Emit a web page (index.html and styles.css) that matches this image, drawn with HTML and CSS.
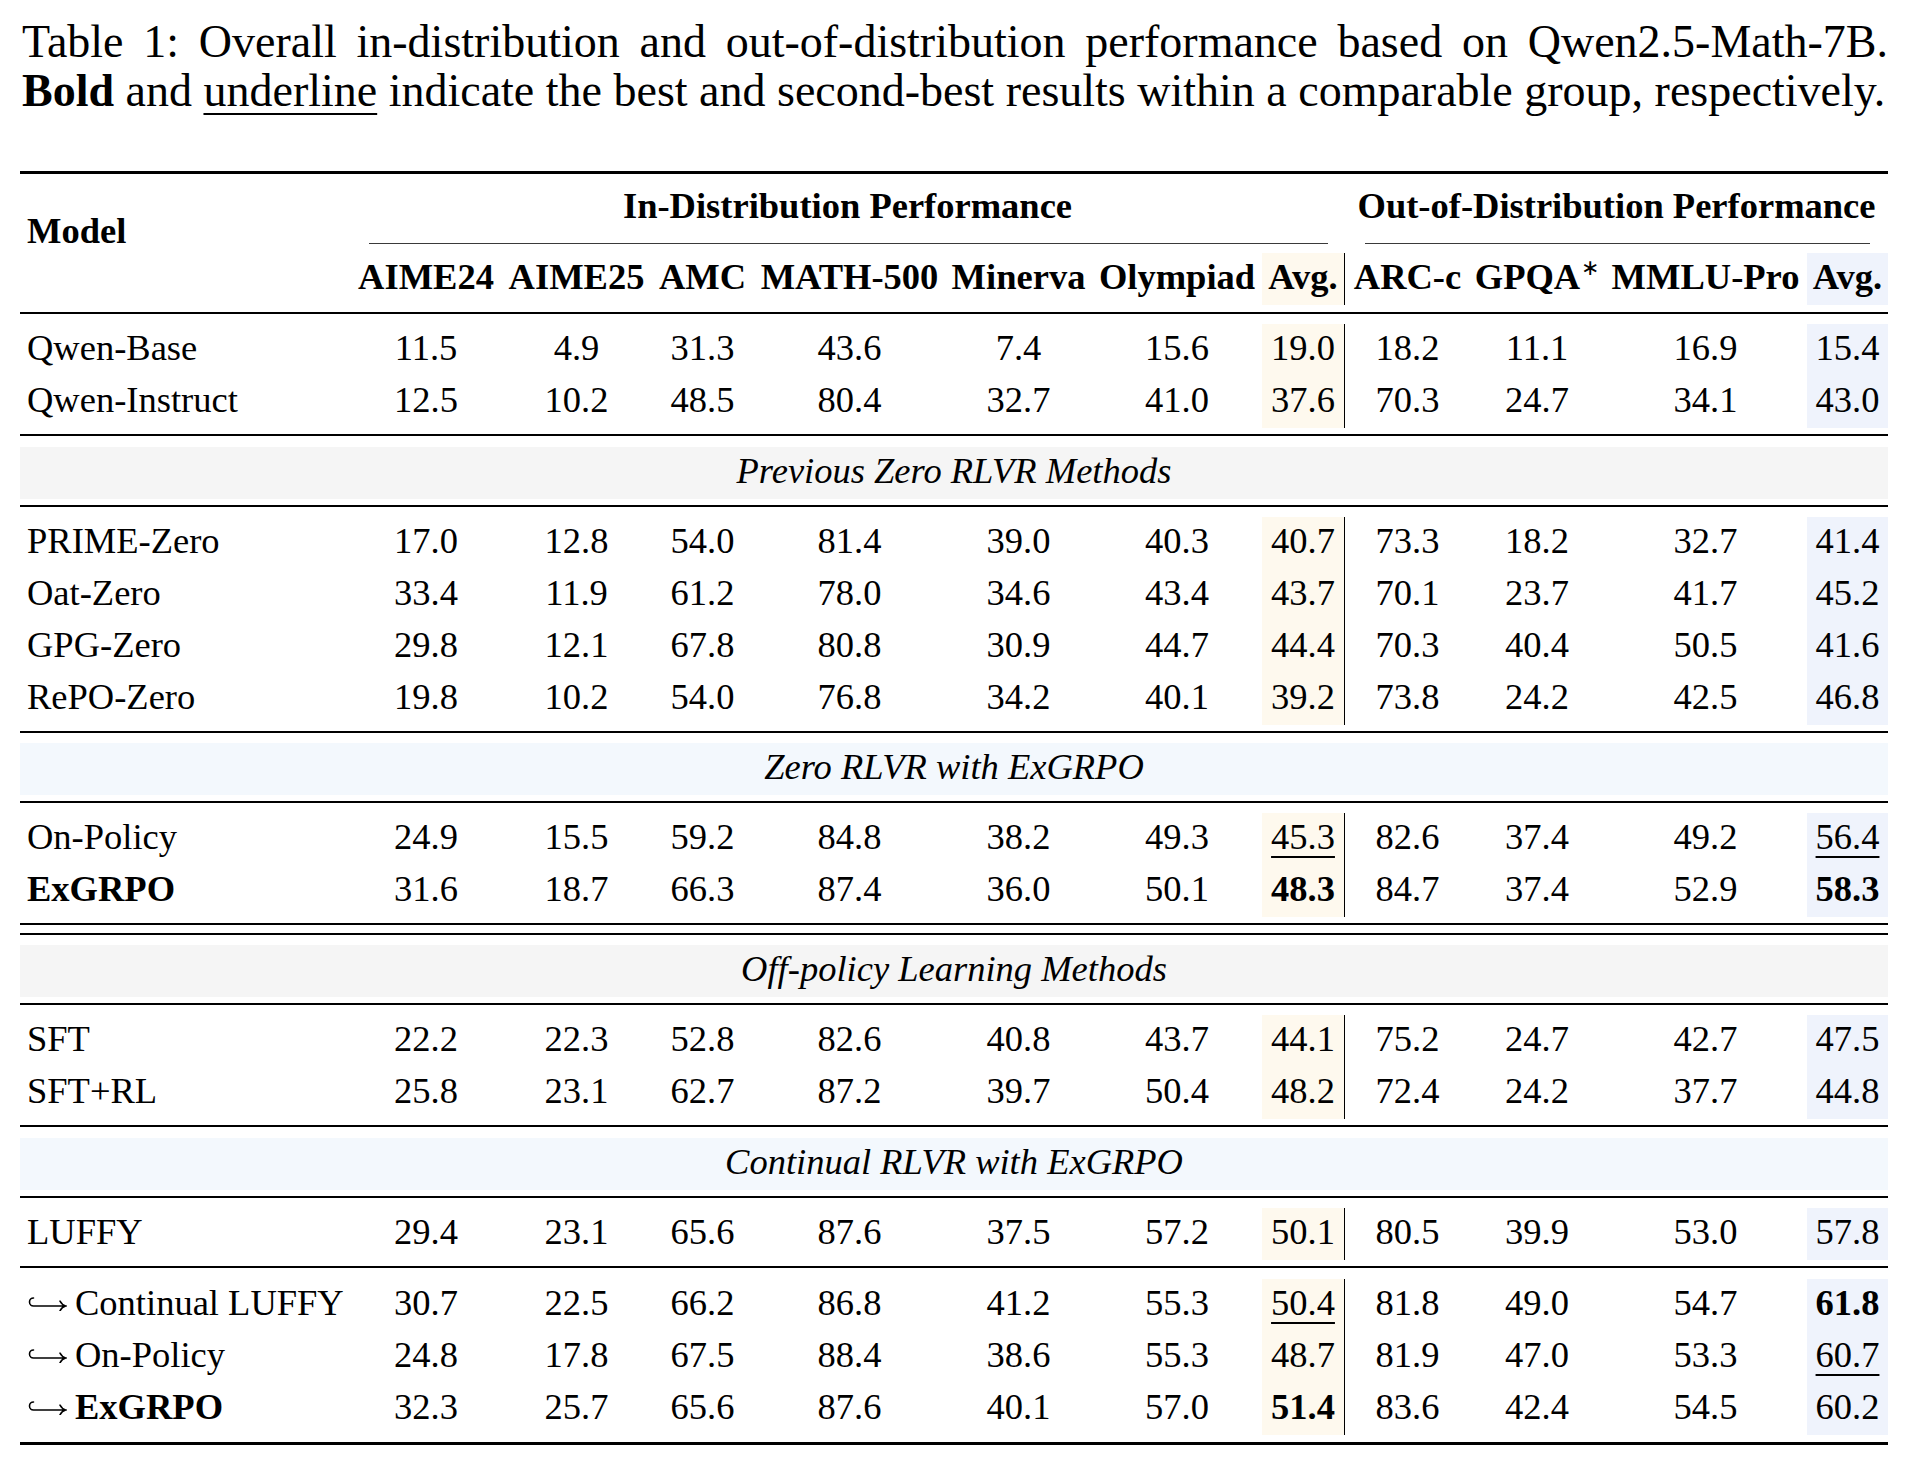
FILE: index.html
```html
<!DOCTYPE html>
<html lang="en">
<head>
<meta charset="utf-8">
<title>Table 1</title>
<link rel="stylesheet" href="styles.css">
</head>
<body>
<div class="page">
  <div class="caption">
    <div class="cap-line cap-l1">Table 1: Overall in-distribution and out-of-distribution performance based on Qwen2.5-Math-7B.</div>
    <div class="cap-line cap-l2"><b>Bold</b> and <span class="ul">underline</span> indicate the best and second-best results within a comparable group, respectively.</div>
  </div>

  <div class="tbl">
    <div class="rule heavy top"></div>

    <div class="thead">
      <div class="model-h">Model</div>
      <div class="group-h g-id">In-Distribution Performance</div>
      <div class="group-h g-ood">Out-of-Distribution Performance</div>
      <div class="cmid c-id"></div>
      <div class="cmid c-ood"></div>
      <div class="lab l2">AIME24</div>
      <div class="lab">AIME25</div>
      <div class="lab">AMC</div>
      <div class="lab">MATH-500</div>
      <div class="lab">Minerva</div>
      <div class="lab">Olympiad</div>
      <div class="lab avg1">Avg.</div>
      <div class="lab">ARC-c</div>
      <div class="lab">GPQA<sup class="ast">∗</sup></div>
      <div class="lab">MMLU-Pro</div>
      <div class="lab avg2">Avg.</div>
    </div>

    <div class="rule mid first"></div>

    <div class="row"><div class="m">Qwen-Base</div><div class="n">11.5</div><div class="n">4.9</div><div class="n">31.3</div><div class="n">43.6</div><div class="n">7.4</div><div class="n">15.6</div><div class="n avg1">19.0</div><div class="n">18.2</div><div class="n">11.1</div><div class="n">16.9</div><div class="n avg2">15.4</div></div>
    <div class="row"><div class="m">Qwen-Instruct</div><div class="n">12.5</div><div class="n">10.2</div><div class="n">48.5</div><div class="n">80.4</div><div class="n">32.7</div><div class="n">41.0</div><div class="n avg1">37.6</div><div class="n">70.3</div><div class="n">24.7</div><div class="n">34.1</div><div class="n avg2">43.0</div></div>

    <div class="rule mid wide"></div>
    <div class="section gray">Previous Zero RLVR Methods</div>
    <div class="rule mid"></div>

    <div class="row"><div class="m">PRIME-Zero</div><div class="n">17.0</div><div class="n">12.8</div><div class="n">54.0</div><div class="n">81.4</div><div class="n">39.0</div><div class="n">40.3</div><div class="n avg1">40.7</div><div class="n">73.3</div><div class="n">18.2</div><div class="n">32.7</div><div class="n avg2">41.4</div></div>
    <div class="row"><div class="m">Oat-Zero</div><div class="n">33.4</div><div class="n">11.9</div><div class="n">61.2</div><div class="n">78.0</div><div class="n">34.6</div><div class="n">43.4</div><div class="n avg1">43.7</div><div class="n">70.1</div><div class="n">23.7</div><div class="n">41.7</div><div class="n avg2">45.2</div></div>
    <div class="row"><div class="m">GPG-Zero</div><div class="n">29.8</div><div class="n">12.1</div><div class="n">67.8</div><div class="n">80.8</div><div class="n">30.9</div><div class="n">44.7</div><div class="n avg1">44.4</div><div class="n">70.3</div><div class="n">40.4</div><div class="n">50.5</div><div class="n avg2">41.6</div></div>
    <div class="row"><div class="m">RePO-Zero</div><div class="n">19.8</div><div class="n">10.2</div><div class="n">54.0</div><div class="n">76.8</div><div class="n">34.2</div><div class="n">40.1</div><div class="n avg1">39.2</div><div class="n">73.8</div><div class="n">24.2</div><div class="n">42.5</div><div class="n avg2">46.8</div></div>

    <div class="rule mid"></div>
    <div class="section blue">Zero RLVR with ExGRPO</div>
    <div class="rule mid"></div>

    <div class="row"><div class="m">On-Policy</div><div class="n">24.9</div><div class="n">15.5</div><div class="n">59.2</div><div class="n">84.8</div><div class="n">38.2</div><div class="n">49.3</div><div class="n avg1"><span class="ul">45.3</span></div><div class="n">82.6</div><div class="n">37.4</div><div class="n">49.2</div><div class="n avg2"><span class="ul">56.4</span></div></div>
    <div class="row"><div class="m b">ExGRPO</div><div class="n">31.6</div><div class="n">18.7</div><div class="n">66.3</div><div class="n">87.4</div><div class="n">36.0</div><div class="n">50.1</div><div class="n avg1 b">48.3</div><div class="n">84.7</div><div class="n">37.4</div><div class="n">52.9</div><div class="n avg2 b">58.3</div></div>

    <div class="rule mid dbl-a"></div>
    <div class="rule mid dbl-b"></div>
    <div class="section gray">Off-policy Learning Methods</div>
    <div class="rule mid"></div>

    <div class="row"><div class="m">SFT</div><div class="n">22.2</div><div class="n">22.3</div><div class="n">52.8</div><div class="n">82.6</div><div class="n">40.8</div><div class="n">43.7</div><div class="n avg1">44.1</div><div class="n">75.2</div><div class="n">24.7</div><div class="n">42.7</div><div class="n avg2">47.5</div></div>
    <div class="row"><div class="m">SFT+RL</div><div class="n">25.8</div><div class="n">23.1</div><div class="n">62.7</div><div class="n">87.2</div><div class="n">39.7</div><div class="n">50.4</div><div class="n avg1">48.2</div><div class="n">72.4</div><div class="n">24.2</div><div class="n">37.7</div><div class="n avg2">44.8</div></div>

    <div class="rule mid wide"></div>
    <div class="section blue">Continual RLVR with ExGRPO</div>
    <div class="rule mid"></div>

    <div class="row"><div class="m">LUFFY</div><div class="n">29.4</div><div class="n">23.1</div><div class="n">65.6</div><div class="n">87.6</div><div class="n">37.5</div><div class="n">57.2</div><div class="n avg1">50.1</div><div class="n">80.5</div><div class="n">39.9</div><div class="n">53.0</div><div class="n avg2">57.8</div></div>

    <div class="rule mid wide"></div>

    <div class="row"><div class="m"><svg class="hook" viewBox="0 0 40 18" aria-label="↪"><path d="M6.5 5 A4 4 0 0 0 6.5 13 H38 M33 8.2 Q35 12 38.6 13 Q35 14 33 17.8"/></svg>Continual LUFFY</div><div class="n">30.7</div><div class="n">22.5</div><div class="n">66.2</div><div class="n">86.8</div><div class="n">41.2</div><div class="n">55.3</div><div class="n avg1"><span class="ul">50.4</span></div><div class="n">81.8</div><div class="n">49.0</div><div class="n">54.7</div><div class="n avg2 b">61.8</div></div>
    <div class="row"><div class="m"><svg class="hook" viewBox="0 0 40 18" aria-label="↪"><path d="M6.5 5 A4 4 0 0 0 6.5 13 H38 M33 8.2 Q35 12 38.6 13 Q35 14 33 17.8"/></svg>On-Policy</div><div class="n">24.8</div><div class="n">17.8</div><div class="n">67.5</div><div class="n">88.4</div><div class="n">38.6</div><div class="n">55.3</div><div class="n avg1">48.7</div><div class="n">81.9</div><div class="n">47.0</div><div class="n">53.3</div><div class="n avg2"><span class="ul">60.7</span></div></div>
    <div class="row"><div class="m"><svg class="hook" viewBox="0 0 40 18" aria-label="↪"><path d="M6.5 5 A4 4 0 0 0 6.5 13 H38 M33 8.2 Q35 12 38.6 13 Q35 14 33 17.8"/></svg><b>ExGRPO</b></div><div class="n">32.3</div><div class="n">25.7</div><div class="n">65.6</div><div class="n">87.6</div><div class="n">40.1</div><div class="n">57.0</div><div class="n avg1 b">51.4</div><div class="n">83.6</div><div class="n">42.4</div><div class="n">54.5</div><div class="n avg2">60.2</div></div>

    <div class="rule heavy bottom"></div>
  </div>
</div>
</body>
</html>
```

FILE: styles.css
```css
html, body {
  margin: 0;
  padding: 0;
  background: #ffffff;
}

body {
  font-family: "Liberation Serif", "Times New Roman", serif;
  color: #000000;
}

.page {
  width: 1868px;
  padding: 17px 20px 0 20px;
}

/* ---------- caption ---------- */
.caption {
  font-size: 46px;
  line-height: 49px;
  margin-bottom: 56px;
  padding-left: 2px;
}

.cap-line {
  white-space: nowrap;
}

.cap-l1 {
  text-align: justify;
  text-align-last: justify;
  white-space: normal;
}

.ul {
  text-decoration: underline;
  text-decoration-thickness: 1.5px;
  text-underline-offset: 7px;
}

/* ---------- table ---------- */
.tbl {
  --cols: 330px 152px 149px 103px 191px 147px 170px 83px 125px 134px 203px 81px;
  font-size: 36.5px;
  width: 1868px;
}

.rule {
  background: #000000;
}

.rule.heavy {
  height: 3px;
}

.rule.mid {
  height: 2px;
  margin: 6px 0 10px 0;
}

.rule.mid.wide {
  margin-bottom: 11px;
}

.rule.mid.first {
  margin-top: 7px;
}

.rule.dbl-a {
  margin-bottom: 8px;
}

.rule.dbl-b {
  margin-top: 0;
}

.rule.bottom {
  margin-top: 7px;
}

/* header */
.thead {
  display: grid;
  grid-template-columns: var(--cols);
  grid-template-rows: 60px 19px 52px;
  font-weight: 700;
  line-height: 48px;
}

.model-h {
  grid-column: 1;
  grid-row: 1 / 4;
  padding: 33px 0 0 7px;
}

.group-h {
  grid-row: 1;
  text-align: center;
  padding-top: 8px;
}

.g-id {
  grid-column: 2 / 9;
}

.g-ood {
  grid-column: 9 / 13;
}

.cmid {
  grid-row: 2;
  height: 1px;
  margin-top: 9px;
  background: #3a3a3a;
}

.c-id {
  grid-column: 2 / 9;
  margin-left: 19px;
  margin-right: 17px;
}

.c-ood {
  grid-column: 9 / 13;
  margin-left: 20px;
  margin-right: 18px;
}

.lab {
  grid-row: 3;
  text-align: center;
  height: 52px;
  white-space: nowrap;
}

.lab.l2 {
  grid-column: 2;
}

.ast {
  font-weight: 400;
  font-size: 22px;
  line-height: 0;
  vertical-align: 14px;
  margin-left: 1px;
}

/* body rows */
.row {
  display: grid;
  grid-template-columns: var(--cols);
  height: 52px;
  line-height: 48px;
}

.m {
  padding-left: 7px;
  white-space: nowrap;
}

.n {
  text-align: center;
}

.b {
  font-weight: 700;
}

.avg1 {
  background: #fef9ee;
  border-right: 1px solid #000000;
  box-sizing: border-box;
}

.avg2 {
  background: #eff3fc;
}

.hook {
  width: 40px;
  height: 18px;
  margin-right: 8px;
  vertical-align: 4px;
  fill: none;
  stroke: #000000;
  stroke-width: 1.6;
  stroke-linecap: round;
}

/* section bands */
.section {
  height: 52px;
  line-height: 48px;
  text-align: center;
  font-style: italic;
}

.section.gray {
  background: #f5f5f5;
}

.section.blue {
  background: #f3f8fd;
}
```
